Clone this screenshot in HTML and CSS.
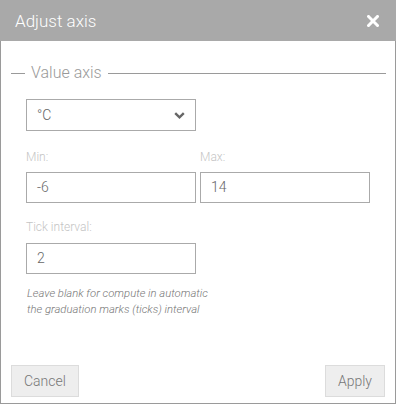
FILE: index.html
```html
<!DOCTYPE html>
<html>
<head>
<meta charset="utf-8">
<link rel="stylesheet" href="styles.css">
</head>
<body>
<div class="dialog">
  <div class="header">
    <span class="title">Adjust axis</span>
    <svg class="close" width="12" height="12" viewBox="0 0 12 12"><path d="M1.5 1.5 L10.5 10.5 M10.5 1.5 L1.5 10.5" stroke="#fff" stroke-width="3" stroke-linecap="square"/></svg>
  </div>
  <div class="content">
    <div class="legend"><span class="legend-text">Value axis</span></div>
    <div class="select">
      <span>°C</span>
      <svg width="11" height="7" viewBox="0 0 11 7"><path d="M1.2 1.2 L5.5 5.3 L9.8 1.2" fill="none" stroke="#666" stroke-width="2.4"/></svg>
    </div>
    <div class="row">
      <div class="field">
        <div class="label">Min:</div>
        <div class="input">-6</div>
      </div>
      <div class="field">
        <div class="label">Max:</div>
        <div class="input">14</div>
      </div>
    </div>
    <div class="field tick">
      <div class="label">Tick interval:</div>
      <div class="input">2</div>
    </div>
    <p class="help">Leave blank for compute in automatic<br>the graduation marks (ticks) interval</p>
    <div class="buttons">
      <button class="btn">Cancel</button>
      <button class="btn">Apply</button>
    </div>
  </div>
</div>
</body>
</html>
```

FILE: styles.css
```css
html, body {
  margin: 0;
  padding: 0;
  background: #fff;
}
body {
  font-family: "Roboto Light", Roboto, "Liberation Sans", sans-serif;
  font-weight: 300;
}
.dialog {
  width: 396px;
  height: 404px;
  box-sizing: border-box;
  border: 1px solid #9a9a9a;
  border-top: none;
  display: flex;
  flex-direction: column;
}
.header {
  height: 41px;
  margin: 0 -1px;
  background: #a9a9a9;
  display: flex;
  align-items: center;
  justify-content: space-between;
  padding: 0 17px 0 15px;
}
.title {
  color: #fff;
  font-size: 17px;
  line-height: 20px;
}
.close {
  display: block;
}
.content {
  flex: 1;
  display: flex;
  flex-direction: column;
  padding: 22px 9px 6px 10px;
}
.legend {
  display: flex;
  align-items: center;
  height: 20px;
  color: #999;
  font-size: 16px;
  line-height: 20px;
}
.legend::before,
.legend::after {
  content: "";
  height: 1px;
  background: #9a9a9a;
}
.legend::before {
  width: 14px;
  margin-right: 6px;
}
.legend::after {
  flex: 1;
  margin-left: 6px;
}
.select {
  margin: 16px 0 0 15px;
  width: 170px;
  height: 32px;
  box-sizing: border-box;
  border: 1px solid #aaa;
  display: flex;
  align-items: center;
  justify-content: space-between;
  padding: 0 10px;
  font-size: 14px;
  color: #666;
}
.row {
  display: flex;
  gap: 4px;
  margin: 19px 0 0 15px;
}
.field {
  display: flex;
  flex-direction: column;
}
.label {
  font-size: 12px;
  line-height: 14px;
  color: #c4c4c4;
  height: 14px;
}
.input {
  margin-top: 8px;
  width: 170px;
  height: 31px;
  box-sizing: border-box;
  border: 1px solid #aaa;
  padding: 0 10px;
  font-size: 14px;
  line-height: 29px;
  color: #666;
}
.tick {
  margin: 17px 0 0 15px;
  align-self: flex-start;
}
.tick .input {
  margin-top: 9px;
}
.help {
  margin: 12px 0 0 16px;
  font-size: 11.3px;
  line-height: 16px;
  font-style: italic;
  color: #777;
}
.buttons {
  margin-top: auto;
  display: flex;
  justify-content: space-between;
  padding-right: 1px;
}
.btn {
  font-family: "Roboto Light", Roboto, "Liberation Sans", sans-serif;
  font-weight: 300;
  font-size: 14px;
  color: #777;
  background: #eeeeee;
  border: 1px solid #dcdcdc;
  height: 32px;
  padding: 0 12px;
  margin: 0;
}
```
